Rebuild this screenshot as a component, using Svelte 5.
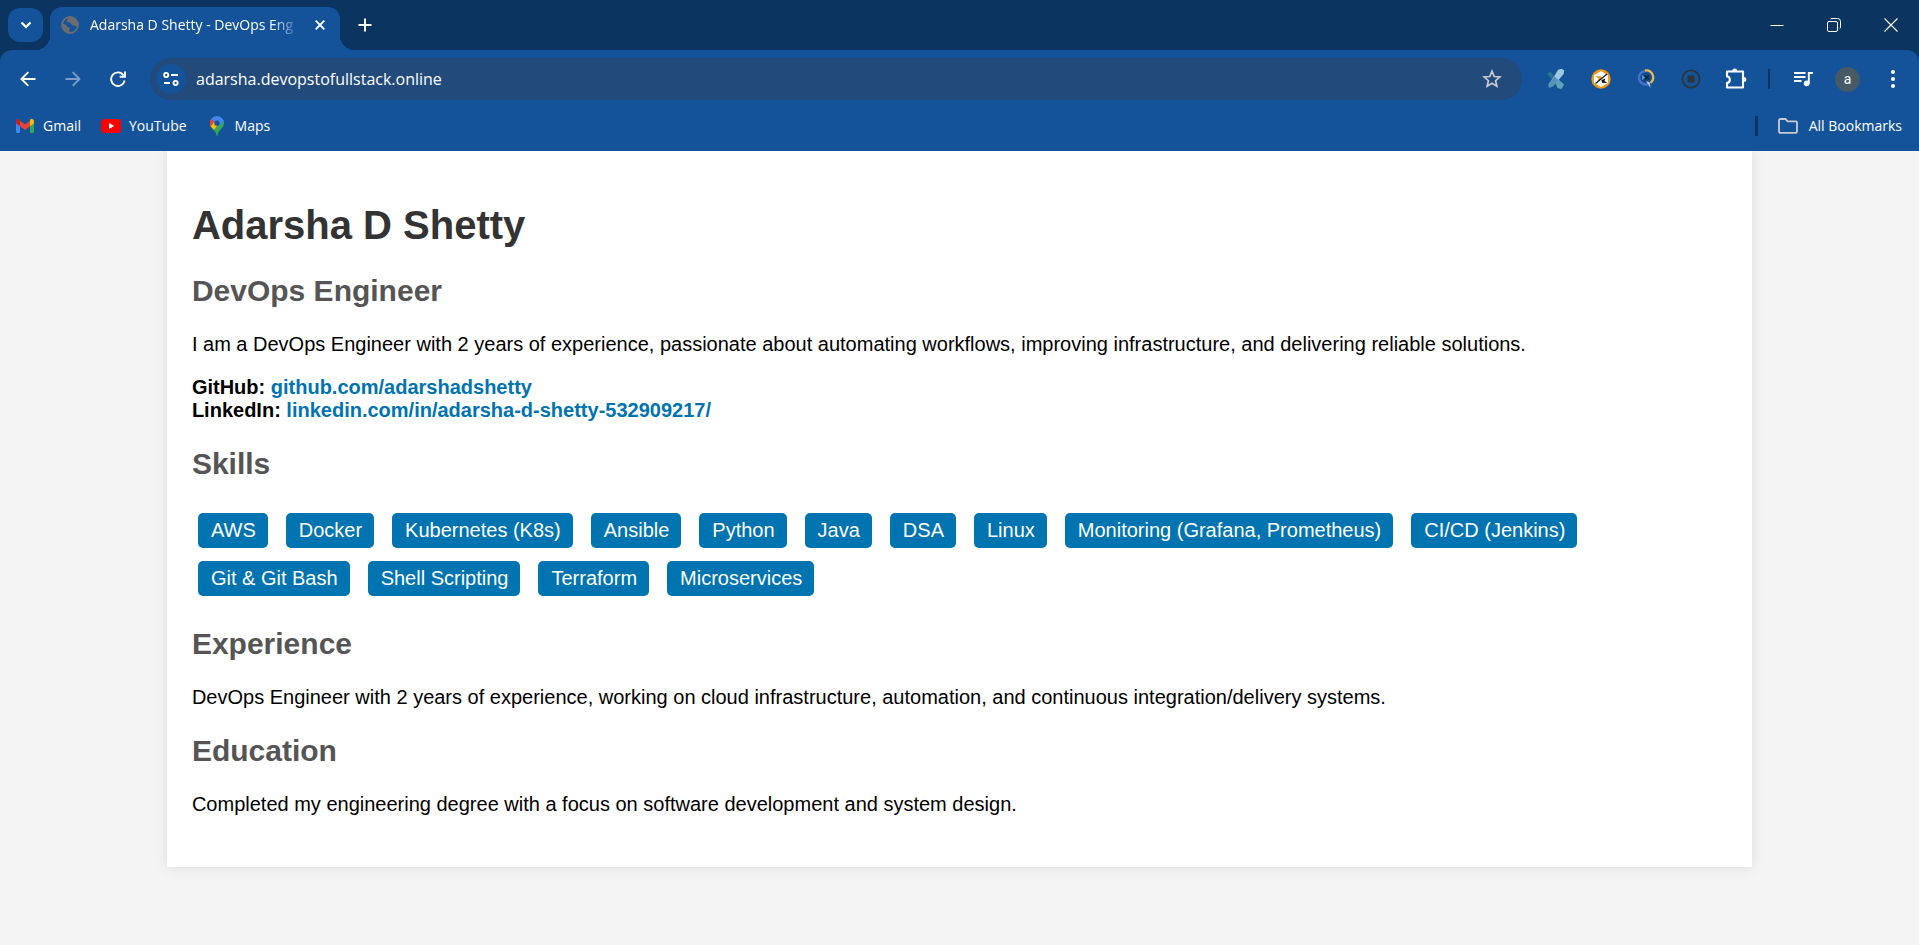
<script>
  const bookmarks = ['Gmail', 'YouTube', 'Maps'];
  const skills = [
    'AWS', 'Docker', 'Kubernetes (K8s)', 'Ansible', 'Python', 'Java', 'DSA', 'Linux',
    'Monitoring (Grafana, Prometheus)', 'CI/CD (Jenkins)', 'Git & Git Bash',
    'Shell Scripting', 'Terraform', 'Microservices'
  ];
  let address = $state('adarsha.devopstofullstack.online');
</script>

<header class="browser">
  <div class="tabstrip">
    <button class="tabsearch" aria-label="Search tabs">
      <svg width="12" height="8" viewBox="0 0 12 8"><path d="M1.500 1.500 6 6l4.500-4.500" fill="none" stroke="#fff" stroke-width="2.200" /></svg>
    </button>
    <div class="tab">
      <svg class="globe" width="18" height="18" viewBox="0 0 18 18">
        <circle cx="9" cy="9" r="8" fill="none" stroke="#6b6d70" stroke-width="1.800" />
        <path d="M1 8c3 0 4 .6 4.600 2 .7 1.700 2 .8 2.900 1.600.8.800-.8 2.300.3 5.200C4 17 .8 13 1 8zM8 1.200c-.3 2-2.300 2-2.300 3.800C5.800 6.900 9 6 9.800 7.600c.6 1.500 1.200 1.900 3.400 1.800 1.500 0 1.600 1.600 3.500 1.300C18 5 14 .5 8 1.200z" fill="#6b6d70" />
      </svg>
      <span class="title">Adarsha D Shetty - DevOps Eng</span>
      <button class="close" aria-label="Close tab">
        <svg width="10" height="10" viewBox="0 0 10 10"><path d="M.7.7l8.600 8.600M9.300.7.7 9.300" stroke="#fff" stroke-width="1.900" /></svg>
      </button>
    </div>
    <button class="newtab" aria-label="New tab">
      <svg width="14" height="14" viewBox="0 0 14 14"><path d="M7 .5v13M.5 7h13" stroke="#fff" stroke-width="2" /></svg>
    </button>
    <div class="window">
      <button aria-label="Minimize"><svg width="14" height="14" viewBox="0 0 14 14"><path d="M.5 7.500h13" stroke="#fff" /></svg></button>
      <button aria-label="Restore"><svg width="14" height="14" viewBox="0 0 14 14"><rect x=".5" y="3.500" width="10" height="10" rx="1.500" fill="none" stroke="#fff" /><path d="M3.500 1.200c.3-.5.700-.7 1.500-.7h5.500a3 3 0 0 1 3 3V9c0 .8-.2 1.300-.8 1.600" fill="none" stroke="#fff" /></svg></button>
      <button aria-label="Close"><svg width="14" height="14" viewBox="0 0 14 14"><path d="M.5.5l13 13M13.500.5l-13 13" stroke="#fff" stroke-width="1.100" /></svg></button>
    </div>
  </div>

  <div class="toolbar">
    <nav class="history" aria-label="History">
      <button aria-label="Back"><svg width="16" height="16" viewBox="0 0 16 16"><path d="M15.500 8H2M8.300 1.200 1.500 8l6.800 6.800" fill="none" stroke="#fff" stroke-width="1.900" /></svg></button>
      <button aria-label="Forward" disabled><svg width="16" height="16" viewBox="0 0 16 16"><path d="M.5 8H14M7.700 1.200 14.500 8l-6.800 6.800" fill="none" stroke="#7d9cc7" stroke-width="1.900" /></svg></button>
      <button aria-label="Reload"><svg width="16" height="16" viewBox="0 0 16 16"><path d="M13.600 4.400A6.800 6.800 0 1 0 14.600 9.500M15 .5v5.300H9.700" fill="none" stroke="#fff" stroke-width="1.900" /></svg></button>
    </nav>
    <div class="omnibox">
      <button class="site" aria-label="View site information">
        <svg width="16" height="14" viewBox="0 0 16 14"><g fill="none" stroke="#fff" stroke-width="1.900"><circle cx="3.200" cy="3" r="2.100" /><path d="M8 3h7M1 11h6" /><circle cx="12.600" cy="11" r="2.100" /></g></svg>
      </button>
      <input type="text" aria-label="Address" bind:value={address} />
      <button class="star" aria-label="Bookmark this tab">
        <svg width="20" height="20" viewBox="0 0 20 20"><path d="M10 2.200l2.200 5.300 5.700.5-4.300 3.700 1.300 5.600-4.900-3-4.900 3 1.300-5.600L2.100 8l5.700-.5z" fill="none" stroke="#c8cbd0" stroke-width="1.700" /></svg>
      </button>
    </div>
    <div class="extensions">
      <button aria-label="Confluence helper">
        <svg width="20" height="22" viewBox="0 0 20 22"><path d="M1 5.500 4.500 3.500l4 5.500 9.500 7.500-2.500 4.500-4-1L7 13z" fill="#28758f" /><path d="m9 13 3-2 6 5.500-2.500 4.500-4-1z" fill="#5fa3bb" /><path d="M12 2 15.500.8l2.700 1.700-.7 3.500L7 18.500 3 20l-.8-3.500z" fill="#5795b8" /><path d="M12 2 15.500.8l2.700 1.700-.7 3.500-5 6-4-3.500z" fill="#9dc8df" /></svg>
      </button>
      <button aria-label="Page tools">
        <svg width="20" height="20" viewBox="0 0 20 20"><circle cx="10" cy="10" r="9.700" fill="#f39a12" /><path d="m10 3 6.300 3.600v7L10 17l-6.300-3.400v-7z" fill="#fff" stroke="#fff" stroke-width="1.500" stroke-linejoin="round" /><path d="m4 7 5.500.3 1.800 2-5.300 4.200 1.500-4.200z" fill="#f39a12" /><path d="m10.500 11 4-1.500-1 2.500 2.800 2-5.300-.2z" fill="#111" /><path d="M16 5 4.500 14.500" stroke="#111" stroke-width="1.100" /></svg>
      </button>
      <button aria-label="Query tool">
        <svg width="18" height="20" viewBox="0 0 18 20"><path d="M8 2A6.800 6.800 0 1 0 11 15.200" fill="none" stroke="#4472c6" stroke-width="2.600" /><path d="M8 1.600A7 7 0 0 1 13.500 14" fill="none" stroke="#f0ba48" stroke-width="2.200" /><circle cx="8" cy="8.500" r="4.600" fill="#14457f" /><path d="M5 5.800 8 8.500l-3 2.700z" fill="#3aa6ed" /><path d="m7.500 6.500 4.500 4M12 6.500l-4 4" stroke="#17212b" stroke-width="1.500" /><path d="m9 12 4.500 7-.8-5.500z" fill="#c0cce2" /></svg>
      </button>
      <button aria-label="Recorder">
        <svg width="20" height="20" viewBox="0 0 20 20"><circle cx="10" cy="10" r="8.600" fill="none" stroke="#2f3437" stroke-width="1.800" /><rect x="6.500" y="6.500" width="7" height="7" rx="1" fill="#2f3437" /></svg>
      </button>
      <button aria-label="Extensions">
        <svg width="22" height="22" viewBox="0 0 22 22"><path d="M2 3.500h16v16H2v-4.600c3.800-.2 3.800-6.200 0-6.400z" fill="none" stroke="#fff" stroke-width="2.100" stroke-linejoin="round" /><path d="M7.200 3a2.500 2.500 0 0 1 5 0zM19 9a2.500 2.500 0 0 1 0 5z" fill="#fff" /></svg>
      </button>
    </div>
    <i class="divider"></i>
    <div class="actions">
      <button aria-label="Media controls">
        <svg width="20" height="18" viewBox="0 0 20 18"><path d="M1 3h11.500M1 7h11.500M1 11h7.500" stroke="#fff" stroke-width="1.900" /><path d="M15.800 13V3H20" fill="none" stroke="#fff" stroke-width="1.900" /><circle cx="13.700" cy="13.300" r="2.900" fill="#fff" /></svg>
      </button>
      <button class="avatar" aria-label="Profile">a</button>
      <button aria-label="Menu"><svg width="4" height="20" viewBox="0 0 4 20"><g fill="#fff"><circle cx="2" cy="3" r="2" /><circle cx="2" cy="10" r="2" /><circle cx="2" cy="17" r="2" /></g></svg></button>
    </div>
  </div>

  <nav class="bookmarks" aria-label="Bookmarks">
    {#each bookmarks as name}
      <a href="#{name}">
        {#if name === 'Gmail'}
          <svg width="20" height="20" viewBox="0 0 20 20"><path d="M1 5.500v10.200c0 .7.500 1.200 1.200 1.200H5V8.500z" fill="#4285f4" /><path d="M15 8.500v8.400h2.800c.7 0 1.200-.5 1.200-1.200V5.500z" fill="#34a853" /><path d="M15 5v5.200l4-3V5.300c0-2-2.200-2.800-3.600-1.700z" fill="#fbbc04" /><path d="M5 10.200V4.700l5 3.700 5-3.700v5.500L10 14z" fill="#ea4335" /><path d="M1 5.300v1.900l4 3V4.700L4.600 3.600C3.200 2.500 1 3.300 1 5.300z" fill="#c5221f" /></svg>
        {:else if name === 'YouTube'}
          <svg width="20" height="20" viewBox="0 0 20 20"><rect y="3" width="20" height="14" rx="3.500" fill="#f00" /><path d="m8 7 5.200 3L8 13z" fill="#fff" /></svg>
        {:else}
          <svg width="20" height="20" viewBox="0 0 20 20"><clipPath id="pin"><path d="M10 .3a7 7 0 0 1 7 7c0 4.500-5 6-6.300 11.300-.2 1-.2 1.300-.7 1.300s-.5-.3-.7-1.300C8 13.300 3 11.800 3 7.300a7 7 0 0 1 7-7z" /></clipPath><g clip-path="url(#pin)"><path d="M0 0h20v20H0z" fill="#34a853" /><path d="M12 8 4 17 0 12 7 6z" fill="#fbbc04" /><path d="M0 0h8v5L3.500 10.500 0 9z" fill="#ea4335" /><path d="M5-1h15v3L11 11 5 3z" fill="#4285f4" /></g><circle cx="10" cy="7.200" r="2.600" fill="#14539a" /></svg>
        {/if}
        {name}
      </a>
    {/each}
    <i class="divider"></i>
    <button class="all">
      <svg width="20" height="16" viewBox="0 0 20 16"><path d="M2.500 1h5l2 2.300h8.300c.7 0 1.200.5 1.200 1.200v9c0 .8-.5 1.300-1.200 1.300H2.500c-.8 0-1.500-.5-1.500-1.300v-11C1 1.600 1.600 1 2.500 1z" fill="none" stroke="#c8cbd0" stroke-width="1.800" /></svg>
      All Bookmarks
    </button>
  </nav>
</header>

<main>
  <h1>Adarsha D Shetty</h1>
  <h2>DevOps Engineer</h2>
  <p>I am a DevOps Engineer with 2 years of experience, passionate about automating workflows, improving infrastructure, and delivering reliable solutions.</p>
  <p class="contact">
    GitHub: <a href="https://github.com/adarshadshetty">github.com/adarshadshetty</a><br />
    LinkedIn: <a href="https://linkedin.com/in/adarsha-d-shetty-532909217/">linkedin.com/in/adarsha-d-shetty-532909217/</a>
  </p>
  <h2>Skills</h2>
  <ul>
    {#each skills as skill}<li>{skill}</li>{/each}
  </ul>
  <h2>Experience</h2>
  <p>DevOps Engineer with 2 years of experience, working on cloud infrastructure, automation, and continuous integration/delivery systems.</p>
  <h2>Education</h2>
  <p>Completed my engineering degree with a focus on software development and system design.</p>
</main>

<style>
  :global(body) { margin: 0; min-height: 100vh; background: #f4f4f4; font-family: "Liberation Sans", Arial, sans-serif; }
  :global(#app) { display: flow-root; }
  svg { display: block; flex: none; }
  button { display: flex; align-items: center; justify-content: center; margin: 0; padding: 0; border: 0; background: none; color: inherit; font: inherit; }

  .browser { position: relative; z-index: 1; background: #0b3560; color: #fff; font: 14px/20px "Open Sans", "Noto Sans", sans-serif; }
  .tabstrip { display: flex; height: 50px; padding-left: 8px; }
  .tabsearch { width: 35px; height: 34px; margin-top: 8px; border-radius: 12px; background: #14539a; }
  .tab { position: relative; display: flex; align-items: center; box-sizing: border-box; width: 290px; height: 43px; margin: 7px 0 0 7px; padding: 0 15px 7px 11px; border-radius: 12px 12px 0 0; background: #14539a; }
  .tab::before, .tab::after { content: ""; position: absolute; bottom: 0; width: 14px; height: 14px; }
  .tab::before { right: 100%; background: radial-gradient(circle at 0 0, transparent 14px, #14539a 14px); }
  .tab::after { left: 100%; background: radial-gradient(circle at 100% 0, transparent 14px, #14539a 14px); }
  .title { flex: 1; margin: 0 10px 0 11px; white-space: nowrap; mask-image: linear-gradient(to right, #000 84%, transparent 98%); }
  .newtab { width: 30px; margin-left: 10px; }
  .window { display: flex; margin-left: auto; }
  .window button { width: 57px; }

  .toolbar { display: flex; align-items: center; height: 58px; padding: 0 9px 0 10px; border-radius: 12px 12px 0 0; background: #14539a; }
  .history { display: flex; gap: 10px; }
  .history button { width: 35px; height: 35px; }
  .omnibox { display: flex; flex: 1; align-items: center; height: 42px; margin-left: 15px; padding: 0 17px 0 6px; border-radius: 21px; background: #224a7b; }
  .site { width: 30px; height: 30px; border-radius: 50%; background: #14539a; }
  input { flex: 1; min-width: 0; padding: 0; margin: 0 10px; border: 0; outline: 0; background: none; color: #fff; font: 16px/24px "Open Sans", "Noto Sans", sans-serif; }
  .star { width: 26px; height: 30px; }
  .extensions { display: flex; margin-left: 11px; }
  .extensions button { width: 45px; height: 35px; }
  .divider { width: 2px; height: 20px; background: #0b3560; }
  .toolbar .divider { margin: 0 15px 0 10px; }
  .actions { display: flex; align-items: center; gap: 10px; }
  .actions button { width: 35px; height: 35px; }
  .actions .avatar { width: 25px; height: 25px; margin: 0 5px; border-radius: 50%; background: #455a64; font-family: Roboto, sans-serif; }

  .bookmarks { display: flex; align-items: center; box-sizing: border-box; height: 43px; padding: 0 17px 8px 15px; background: #14539a; }
  .bookmarks a { display: flex; align-items: center; gap: 8px; margin-right: 20px; color: #fff; text-decoration: none; }
  .bookmarks .divider { width: 3px; margin-left: auto; }
  .all { gap: 11px; margin-left: 20px; }

  main { display: flow-root; width: 80%; margin: 0 auto 40px; padding: 24px 25px 31px; background: #fff; box-shadow: 0 0 13px rgba(0, 0, 0, 0.1); color: #000; }
  h1 { margin: 27px 0 26px; color: #333; font-size: 40px; line-height: 46px; }
  h2 { margin: 25px 0; color: #555; font-size: 30px; line-height: 34px; }
  p { margin: 20px 0; font-size: 20px; line-height: 23px; }
  .contact { font-weight: bold; }
  .contact a { color: #0073b1; text-decoration: none; }
  ul { display: flex; flex-wrap: wrap; gap: 13px 18px; margin: 0; padding: 7px 6px 6px; list-style: none; }
  li { padding: 6px 12px 6px 13px; border-radius: 5px; background: #0073b1; color: #fff; font-size: 20px; line-height: 23px; }
</style>
